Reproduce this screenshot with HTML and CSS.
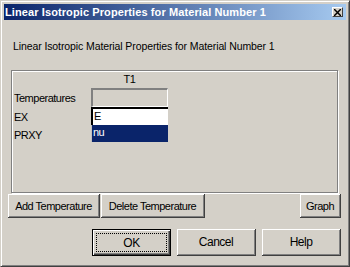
FILE: index.html
```html
<!DOCTYPE html>
<html lang="en">
<head>
    <meta charset="UTF-8">
    <title>Linear Isotropic Properties</title>
    <link rel="stylesheet" href="styles.css">
</head>
<body>

    <!-- Dialog window -->
    <div class="window">
        <div class="titlebar">
            <span class="title">Linear Isotropic Properties for Material Number 1</span>
            <span class="close-btn">
                <svg width="7" height="7" viewBox="0 0 7 7"><path d="M0 0L7 7M7 0L0 7" stroke="#000" stroke-width="1.5"/></svg>
            </span>
        </div>

        <div class="dialog-body">
            <p class="caption">Linear Isotropic Material Properties for Material Number 1</p>

            <!-- Property table -->
            <div class="group">
                <div class="prop-grid">
                    <span></span>
                    <span class="col-head">T1</span>
                    <span class="label">Temperatures</span>
                    <span class="cell cell-temp"></span>
                    <span class="label">EX</span>
                    <span class="cell cell-edit">E</span>
                    <span class="label">PRXY</span>
                    <span class="cell cell-selected">nu</span>
                </div>
            </div>

            <div class="tool-row">
                <button class="btn btn-add">Add Temperature</button>
                <button class="btn btn-delete">Delete Temperature</button>
                <button class="btn btn-graph">Graph</button>
            </div>

            <div class="action-row">
                <button class="btn btn-action btn-default"><span class="focus">OK</span></button>
                <button class="btn btn-action">Cancel</button>
                <button class="btn btn-action">Help</button>
            </div>
        </div>
    </div>

</body>
</html>
```

FILE: styles.css
```css
/* General */
body {
    margin: 0;
    padding: 0;
    font-family: "Liberation Sans", Arial, sans-serif;
    font-size: 11px;
    letter-spacing: -0.5px;
    color: #000;
    background: #d4d0c8;
}

/* Window frame */
.window {
    width: 350px;
    height: 267px;
    box-sizing: border-box;
    background: #d4d0c8;
    border-top: 1px solid #d4d0c8;
    border-left: 1px solid #d4d0c8;
    border-right: 1px solid #404040;
    border-bottom: 1px solid #404040;
    box-shadow: inset 1px 1px 0 #fff, inset -1px -1px 0 #808080;
    padding: 3px;
    display: flex;
    flex-direction: column;
}

.titlebar {
    height: 16px;
    background: linear-gradient(to right, #0a246a, #a6caf0);
    display: flex;
    align-items: center;
    justify-content: space-between;
    padding: 0 3px 0 1px;
}

.title {
    color: #fff;
    font-weight: bold;
    font-size: 11px;
    letter-spacing: 0.1px;
}

.close-btn {
    width: 9px;
    height: 8px;
    background: #d4d0c8;
    border-top: 1px solid #fff;
    border-left: 1px solid #fff;
    border-right: 1px solid #404040;
    border-bottom: 1px solid #404040;
    display: flex;
    align-items: center;
    justify-content: center;
}

/* Body */
.dialog-body {
    flex: 1;
    display: flex;
    flex-direction: column;
    padding: 0 5px 0 4px;
}

.caption {
    margin: 19px 0 0 5px;
    line-height: 14px;
    font-size: 10.5px;
    letter-spacing: -0.1px;
}

/* Group box */
.group {
    margin: 17px 3px 0 3px;
    height: 123px;
    box-sizing: border-box;
    border: 1px solid #808080;
    box-shadow: inset 1px 1px 0 #fff, 1px 1px 0 #fff;
    padding: 0 0 0 2px;
}

.prop-grid {
    display: grid;
    grid-template-columns: 77px 77px;
    grid-template-rows: 17px 19px 18px 17px;
}

.col-head {
    text-align: center;
    line-height: 14px;
    padding-top: 1px;
}

.label {
    line-height: 18px;
    padding-top: 1px;
}

.cell {
    box-sizing: border-box;
    line-height: 15px;
    padding-left: 1px;
}

.cell-temp {
    border-top: 2px solid #808080;
    border-left: 2px solid #808080;
    border-right: 1px solid #fff;
    border-bottom: 1px solid #fff;
}

.cell-edit {
    background: #fff;
    border-top: 2px solid #000;
    border-left: 2px solid #000;
}

.cell-selected {
    background: #0a246a;
    color: #fff;
    border-left: 1px solid #c0c0c0;
}

/* Buttons */
.btn {
    font-family: "Liberation Sans", Arial, sans-serif;
    font-size: 11px;
    letter-spacing: -0.5px;
    color: #000;
    background: #d4d0c8;
    border: none;
    border-right: 1px solid #404040;
    border-bottom: 1px solid #404040;
    box-shadow: inset 1px 1px 0 #fff, inset -1px -1px 0 #808080;
    padding: 0;
    margin: 0;
}

.tool-row {
    display: flex;
    margin-top: 1px;
    height: 24px;
}

.btn-add {
    width: 92px;
}

.btn-delete {
    width: 104px;
    margin-left: 1px;
}

.btn-graph {
    width: 41px;
    margin-left: auto;
}

.action-row {
    display: flex;
    justify-content: flex-end;
    gap: 6px;
    margin-top: 11px;
    height: 27px;
}

.btn-action {
    width: 79px;
    font-size: 12px;
}

.btn-default {
    border: 1px solid #000;
    box-shadow: inset 1px 1px 0 #fff, inset -1px -1px 0 #404040, inset -2px -2px 0 #808080;
    padding: 3px;
}

.focus {
    display: flex;
    align-items: center;
    justify-content: center;
    height: 100%;
    border: 1px dotted #000;
    box-sizing: border-box;
}
```
